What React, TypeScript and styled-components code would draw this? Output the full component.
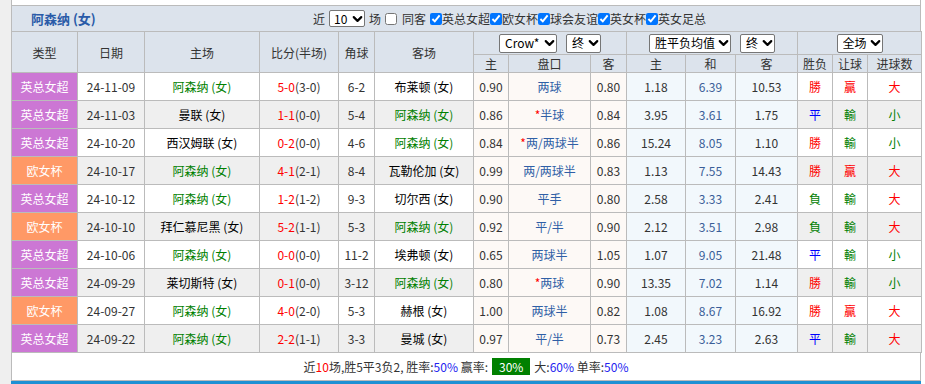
import React from "react";
import styled, { createGlobalStyle } from "styled-components";
import { ChevronDown } from "lucide-react";

const GlobalStyle = createGlobalStyle`
	body {
		margin: 0;
		background: #fff;
		font-family: "Noto Sans CJK SC", "Liberation Sans", sans-serif;
		font-size: 12px;
		color: #333;
	}
`;

const Page = styled.div`
	display: flex;
	height: 384px;
	overflow: hidden;
`;

const Gutter = styled.div`
	width: 11px;
	flex: none;
	background: #efefef;
`;

const Main = styled.div`
	width: 910px;
	flex: none;
	display: flex;
	flex-direction: column;
`;

const TopGap = styled.div`
	height: 5px;
	flex: none;
	border: 1px solid #bbb;
	border-top: none;
	background: #fff;
`;

const TitleBar = styled.div`
	height: 25px;
	flex: none;
	display: flex;
	align-items: center;
	background: #dce3ec;
	border-left: 1px solid #bbb;
	border-right: 1px solid #bbb;
`;

const TeamTitle = styled.span`
	margin-left: 19px;
	width: 278px;
	font-size: 13px;
	font-weight: bold;
	color: #2a5ba8;
`;

const Filters = styled.div`
	display: flex;
	align-items: center;
	line-height: 17px;
`;

const Word = styled.span`
	margin: 0 4px;
`;

const SelectBox = styled.span<{ $w: number; $h: number }>`
	position: relative;
	display: inline-flex;
	width: ${(p) => p.$w}px;
	height: ${(p) => p.$h}px;

	svg {
		position: absolute;
		right: 0;
		top: 50%;
		transform: translateY(-50%);
		pointer-events: none;
		color: #000;
	}
`;

const Select = styled.select<{ $big?: boolean }>`
	appearance: none;
	width: 100%;
	height: 100%;
	box-sizing: border-box;
	font-family: "Noto Sans CJK SC", "Liberation Sans", sans-serif;
	font-size: 12px;
	color: #000;
	padding: 0 0 0 ${(p) => (p.$big ? 5 : 4)}px;
	border: 1px solid #767676;
	border-radius: 2px;
	background: #fff;
	margin: 0;
	line-height: 1;
`;

function Dropdown({ w, h, value, big }: { w: number; h: number; value: string; big?: boolean }) {
	return (
		<SelectBox $w={w} $h={h}>
			<Select $big={big} defaultValue={value}>
				<option>{value}</option>
			</Select>
			<ChevronDown size={15} strokeWidth={3.5} />
		</SelectBox>
	);
}

const Check = styled.label<{ $gap?: number }>`
	display: flex;
	align-items: center;
	margin-right: ${(p) => p.$gap ?? 0}px;

	input {
		width: 12px;
		height: 12px;
		margin: 0 ${(p) => (p.$gap ? 5 : 0)}px 0 0;
	}
`;

const Table = styled.table`
	width: 910px;
	flex: none;
	table-layout: fixed;
	border-collapse: collapse;
	border: 1px solid #bbb;
`;

const Th = styled.th<{ $h?: number }>`
	border: 1px solid #bbb;
	background: #dce3ec;
	font-weight: normal;
	color: #333;
	padding: 0;
	height: ${(p) => p.$h ?? 17}px;
	text-align: center;
`;

const SelectGroup = styled.div`
	display: flex;
	justify-content: center;
	gap: 9px;
`;

const Tr = styled.tr<{ $alt: boolean }>`
	background: ${(p) => (p.$alt ? "#efefef" : "#fff")};
`;

const Td = styled.td`
	border: 1px solid #bbb;
	padding: 0;
	height: 27px;
	text-align: center;
	white-space: nowrap;
`;

const TypeCell = styled(Td)<{ $kind: "league" | "cup" }>`
	background: ${(p) => (p.$kind === "league" ? "#cc77d4" : "#ff9966")};
	color: #fff;
`;

const TeamCell = styled(Td)<{ $own: boolean }>`
	color: ${(p) => (p.$own ? "#008000" : "#000")};
`;

const Goals = styled.span`
	color: #f00;
`;

const OddsCell = styled(Td)<{ $tone: "warm" | "cool"; $blue?: boolean }>`
	background: ${(p) => (p.$tone === "warm" ? "#fdf9f6" : "#f2f8fc")};
	color: ${(p) => (p.$blue ? "#3a5e98" : "#333")};
`;

const LineCell = styled(OddsCell)`
	color: #2f5fa6;
`;

const Star = styled.span`
	color: #f00;
`;

const Mark = styled(Td)<{ $c: string }>`
	color: ${(p) => p.$c};
`;

const Footer = styled.div`
	height: 27px;
	flex: none;
	display: flex;
	align-items: center;
	justify-content: center;
	border: 1px solid #bbb;
	border-top: none;
	background: #fff;
	color: #333;
`;

const Red = styled.span`
	color: #f00;
`;

const Rate = styled.span`
	color: #2323f0;
`;

const Badge = styled.span`
	background: #008000;
	color: #fff;
	padding: 0 7px;
	line-height: 17px;
	margin: 0 4px;
`;

const BlueBar = styled.div`
	height: 10px;
	flex: none;
	background: #1e90d4;
`;

type Row = {
	kind: "league" | "cup";
	date: string;
	home: string;
	score: string;
	half: string;
	corner: string;
	away: string;
	o1: string;
	line: string;
	star?: boolean;
	o2: string;
	w: string;
	d: string;
	l: string;
	res: string;
	hcp: string;
	ou: string;
};

const ARS = "阿森纳 (女)";

const rows: Row[] = [
	{ kind: "league", date: "24-11-09", home: ARS, score: "5-0", half: "3-0", corner: "6-2", away: "布莱顿 (女)", o1: "0.90", line: "两球", o2: "0.80", w: "1.18", d: "6.39", l: "10.53", res: "勝", hcp: "贏", ou: "大" },
	{ kind: "league", date: "24-11-03", home: "曼联 (女)", score: "1-1", half: "0-0", corner: "5-4", away: ARS, o1: "0.86", line: "半球", star: true, o2: "0.84", w: "3.95", d: "3.61", l: "1.75", res: "平", hcp: "輸", ou: "小" },
	{ kind: "league", date: "24-10-20", home: "西汉姆联 (女)", score: "0-2", half: "0-0", corner: "4-6", away: ARS, o1: "0.84", line: "两/两球半", star: true, o2: "0.86", w: "15.24", d: "8.05", l: "1.10", res: "勝", hcp: "輸", ou: "小" },
	{ kind: "cup", date: "24-10-17", home: ARS, score: "4-1", half: "2-1", corner: "8-4", away: "瓦勒伦加 (女)", o1: "0.99", line: "两/两球半", o2: "0.83", w: "1.13", d: "7.55", l: "14.43", res: "勝", hcp: "贏", ou: "大" },
	{ kind: "league", date: "24-10-12", home: ARS, score: "1-2", half: "1-2", corner: "9-3", away: "切尔西 (女)", o1: "0.90", line: "平手", o2: "0.80", w: "2.58", d: "3.33", l: "2.41", res: "負", hcp: "輸", ou: "大" },
	{ kind: "cup", date: "24-10-10", home: "拜仁慕尼黑 (女)", score: "5-2", half: "1-1", corner: "5-3", away: ARS, o1: "0.92", line: "平/半", o2: "0.90", w: "2.12", d: "3.51", l: "2.98", res: "負", hcp: "輸", ou: "大" },
	{ kind: "league", date: "24-10-06", home: ARS, score: "0-0", half: "0-0", corner: "11-2", away: "埃弗顿 (女)", o1: "0.65", line: "两球半", o2: "1.05", w: "1.07", d: "9.05", l: "21.48", res: "平", hcp: "輸", ou: "小" },
	{ kind: "league", date: "24-09-29", home: "莱切斯特 (女)", score: "0-1", half: "0-0", corner: "3-12", away: ARS, o1: "0.80", line: "两球", star: true, o2: "0.90", w: "13.35", d: "7.02", l: "1.14", res: "勝", hcp: "輸", ou: "小" },
	{ kind: "cup", date: "24-09-27", home: ARS, score: "4-0", half: "2-0", corner: "5-3", away: "赫根 (女)", o1: "1.00", line: "两球半", o2: "0.82", w: "1.08", d: "8.67", l: "16.92", res: "勝", hcp: "贏", ou: "大" },
	{ kind: "league", date: "24-09-22", home: ARS, score: "2-2", half: "1-1", corner: "3-3", away: "曼城 (女)", o1: "0.97", line: "平/半", o2: "0.73", w: "2.45", d: "3.23", l: "2.63", res: "平", hcp: "輸", ou: "大" },
];

const colWidths = [66, 67, 115, 79, 36, 99, 35, 82, 36, 59, 50, 62, 35, 35, 54];

const markColor: Record<string, string> = {
	勝: "#f00",
	平: "#00f",
	負: "#008000",
	贏: "#f00",
	輸: "#008000",
	大: "#f00",
	小: "#008000",
};

const leagues = ["英总女超", "欧女杯", "球会友谊", "英女杯", "英女足总"];

export default function App() {
	return (
		<Page>
			<GlobalStyle />
			<Gutter />
			<Main>
				<TopGap />
				<TitleBar>
					<TeamTitle>阿森纳 (女)</TeamTitle>
					<Filters>
						<Word>近</Word>
						<Dropdown w={36} h={17} value="10" />
						<Word>场</Word>
						<Check $gap={4}>
							<input type="checkbox" />
							同客
						</Check>
						{leagues.map((l) => (
							<Check key={l}>
								<input type="checkbox" defaultChecked />
								{l}
							</Check>
						))}
					</Filters>
				</TitleBar>
				<Table>
					<colgroup>
						{colWidths.map((w, i) => (
							<col key={i} style={{ width: w }} />
						))}
					</colgroup>
					<thead>
						<tr>
							<Th rowSpan={2}>类型</Th>
							<Th rowSpan={2}>日期</Th>
							<Th rowSpan={2}>主场</Th>
							<Th rowSpan={2}>比分(半场)</Th>
							<Th rowSpan={2}>角球</Th>
							<Th rowSpan={2}>客场</Th>
							<Th colSpan={3} $h={22}>
								<SelectGroup>
									<Dropdown w={58} h={19} value="Crow*" big />
									<Dropdown w={35} h={19} value="终" big />
								</SelectGroup>
							</Th>
							<Th colSpan={3} $h={22}>
								<SelectGroup>
									<Dropdown w={82} h={19} value="胜平负均值" big />
									<Dropdown w={35} h={19} value="终" big />
								</SelectGroup>
							</Th>
							<Th colSpan={3} $h={22}>
								<SelectGroup>
									<Dropdown w={46} h={19} value="全场" big />
								</SelectGroup>
							</Th>
						</tr>
						<tr>
							<Th>主</Th>
							<Th>盘口</Th>
							<Th>客</Th>
							<Th>主</Th>
							<Th>和</Th>
							<Th>客</Th>
							<Th>胜负</Th>
							<Th>让球</Th>
							<Th>进球数</Th>
						</tr>
					</thead>
					<tbody>
						{rows.map((r, i) => (
							<Tr key={r.date} $alt={i % 2 === 1}>
								<TypeCell $kind={r.kind}>{r.kind === "league" ? "英总女超" : "欧女杯"}</TypeCell>
								<Td>{r.date}</Td>
								<TeamCell $own={r.home === ARS}>{r.home}</TeamCell>
								<Td>
									<Goals>{r.score}</Goals>({r.half})
								</Td>
								<Td>{r.corner}</Td>
								<TeamCell $own={r.away === ARS}>{r.away}</TeamCell>
								<OddsCell $tone="warm">{r.o1}</OddsCell>
								<LineCell $tone="warm">
									{r.star && <Star>*</Star>}
									{r.line}
								</LineCell>
								<OddsCell $tone="warm">{r.o2}</OddsCell>
								<OddsCell $tone="cool">{r.w}</OddsCell>
								<OddsCell $tone="cool" $blue>
									{r.d}
								</OddsCell>
								<OddsCell $tone="cool">{r.l}</OddsCell>
								<Mark $c={markColor[r.res]}>{r.res}</Mark>
								<Mark $c={markColor[r.hcp]}>{r.hcp}</Mark>
								<Mark $c={markColor[r.ou]}>{r.ou}</Mark>
							</Tr>
						))}
					</tbody>
				</Table>
				<Footer>
					近<Red>10</Red>场,胜5平3负2, 胜率:<Rate>50%</Rate>&nbsp;赢率:
					<Badge>30%</Badge>大:<Rate>60%</Rate>&nbsp;单率:<Rate>50%</Rate>
				</Footer>
				<BlueBar />
			</Main>
		</Page>
	);
}
